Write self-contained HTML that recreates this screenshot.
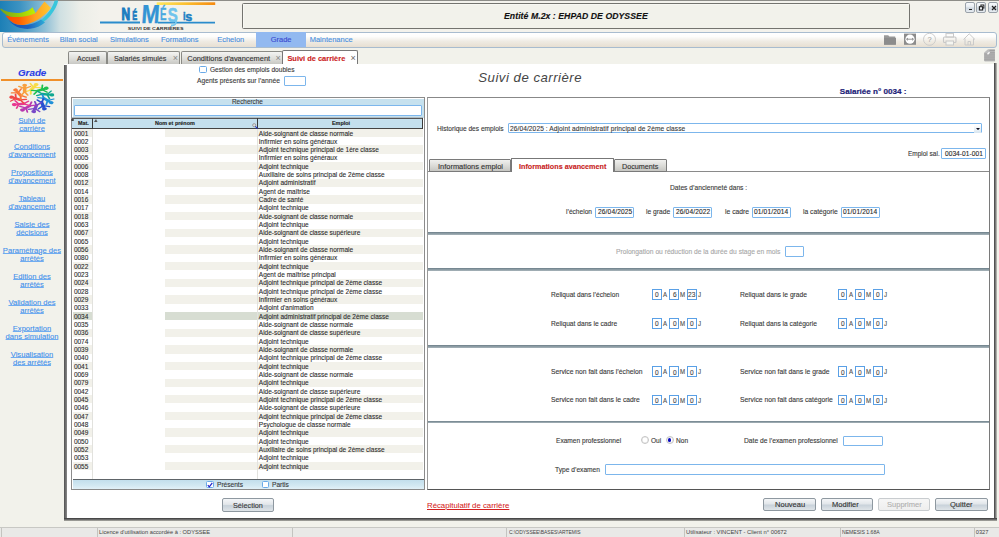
<!DOCTYPE html>
<html><head><meta charset="utf-8">
<style>
*{box-sizing:border-box;margin:0;padding:0}
html,body{width:999px;height:537px;overflow:hidden}
body{position:relative;background:#f2f2eb;font-family:"Liberation Sans",sans-serif;color:#333;-webkit-text-stroke:0.12px currentColor}
.a{position:absolute;white-space:nowrap}
.t{position:absolute;white-space:nowrap;font-size:6.9px;line-height:1;color:#3a3a3a;transform:scaleX(0.955);transform-origin:0 0;margin-top:0.6px}
/* header */
#topline{left:0;top:0;width:999px;height:1.3px;background:#8d8d88}
#hdr{left:0;top:1px;width:999px;height:30.5px;background:linear-gradient(90deg,#1c7fb6 0,#3d93c2 20px,#8fbfd6 45px,#cfe0e2 60px,#eceee8 80px,#f3f2ec 100px)}
#titlebox{left:241.7px;top:3.3px;width:668.5px;height:25.6px;border:1.2px solid #74746f;border-radius:1.5px;background:#f2f2eb;box-shadow:inset 0.8px 0.8px 0 #f9f9f5}
#title{left:504px;top:10.9px;font-size:8.7px;letter-spacing:0.05px;font-weight:bold;font-style:italic;color:#111}
.wb{position:absolute;top:2px;width:10.2px;height:10.6px;border:1px solid #9aa2aa;border-radius:2px;background:linear-gradient(#f8fafc,#e6ebf0 45%,#cdd6de 55%,#e8edf2)}
#menubar{left:2px;top:31.6px;width:995.2px;height:16px;border:1.4px solid #a8bccf;border-radius:3px;background:linear-gradient(#ffffff 0,#fdfdfc 25%,#efebe3 60%,#e7dfd2 100%)}
.mi{position:absolute;top:36.2px;font-size:7.5px;color:#4a90e0;line-height:1}
#gradehl{left:256.2px;top:32.3px;width:49.8px;height:14.6px;background:#92b9f0}
/* sidebar */
#sgrade{left:18px;top:67.3px;font-size:9.8px;font-weight:bold;font-style:italic;color:#2a3ee6}
#sline{left:0.7px;top:79.4px;width:62.5px;height:1.3px;background:#f0902a}
.sl{position:absolute;width:64px;left:0;text-align:center;font-size:7.6px;line-height:8.2px;color:#4290ea;text-decoration:underline;text-decoration-color:#70acf0;text-decoration-thickness:0.9px;text-underline-offset:0.1px;-webkit-text-stroke:0.1px currentColor}
/* tabs */
.tab{position:absolute;top:50.9px;height:12.9px;border:1px solid #8a8a85;border-bottom:none;border-radius:2px 2px 0 0;background:linear-gradient(#f4f4f2,#dcdcd8 60%,#c8c8c4)}
.tabt{position:absolute;top:54.6px;font-size:7.2px;line-height:1;color:#333}
/* window */
#win{left:64.3px;top:63.6px;width:932.5px;height:457.1px;background:#fff}
#winL{left:64.1px;top:64.8px;width:2.7px;height:455.8px;background:linear-gradient(90deg,#505050,#8a8a8a)}
#winR{left:993.8px;top:63.1px;width:3px;height:457.6px;background:linear-gradient(90deg,#3c3c3c,#7c7c7c,#c8c8c0)}
#winB{left:64.3px;top:518px;width:932.5px;height:2.7px;background:linear-gradient(#383838,#6a6a6a,#b0b0a8)}
.cb{position:absolute;width:7.2px;height:6.8px;border:1px solid #6aaae8;border-radius:1.5px;background:#fff}
.inp{position:absolute;border:1.2px solid #7cb6ec;border-radius:1px;background:#fff}
.hd{font-size:5.7px;font-weight:bold;color:#222}
.rs{position:absolute;height:8.33px;background:#f2f1ea}
.rt{position:absolute;white-space:nowrap;font-size:6.5px;line-height:1;color:#2c2c2c;-webkit-text-stroke:0.1px currentColor;margin-left:0.5px}
.btn{position:absolute;border:1px solid #8e98a0;border-radius:2px;background:linear-gradient(#f4f6f8,#e2e6ea 45%,#c8d2da 55%,#dfe4e8)}
.btn.dis{border-color:#c8cccf;background:linear-gradient(#f6f6f6,#eeeeee)}
.bt{font-size:7.9px;color:#333}
.tab2{position:absolute;top:159.4px;height:12.3px;border:1px solid #7a7a7a;border-radius:1px 1px 0 0;background:linear-gradient(#f0f0ee,#d8d8d4 60%,#c6c6c2)}
.sec{position:absolute;left:428.3px;width:560.8px;height:2.6px;background:linear-gradient(#6c7e88,#8c9ca4,#a8b4ba)}
.rad{position:absolute;width:8px;height:8px;border-radius:50%;border:1px solid #c4c4c4;background:#fff;box-shadow:inset 0 0 0 0.6px #e8e8e8}
.nb{position:absolute;width:9.8px;height:10.5px;border:1px solid #5aa0e6;background:#fff}
/* status */
#status{left:0;top:527px;width:999px;height:10px;background:#e9e9e7;border-top:1px solid #c8c8c4}
.sd{position:absolute;top:528px;width:1px;height:9px;background:#c4c4c0}
.st{position:absolute;top:529.6px;font-size:5.7px;line-height:1;color:#444;-webkit-text-stroke:0}
</style></head><body>
<div id="topline" class="a"></div>
<div id="hdr" class="a"></div>
<svg class="a" style="left:0;top:0" width="64" height="32" viewBox="0 0 64 32">
  <defs>
    <linearGradient id="og" gradientUnits="userSpaceOnUse" x1="5" y1="0" x2="51" y2="0"><stop offset="0" stop-color="#ff4800"/><stop offset="0.3" stop-color="#ff6000"/><stop offset="0.65" stop-color="#ffa020"/><stop offset="1" stop-color="#ffc830"/></linearGradient>
    <linearGradient id="bg2" gradientUnits="userSpaceOnUse" x1="8" y1="0" x2="46" y2="0"><stop offset="0" stop-color="#1a50b0"/><stop offset="0.55" stop-color="#1e62c0"/><stop offset="1" stop-color="#30b0d8"/></linearGradient>
    <linearGradient id="gg" gradientUnits="userSpaceOnUse" x1="0" y1="0" x2="36" y2="0"><stop offset="0" stop-color="#7aa018"/><stop offset="0.5" stop-color="#98c808"/><stop offset="1" stop-color="#c4f000"/></linearGradient>
  </defs>
  <path d="M58.2,0.5 C56.5,10 47,22.5 34,27 L30,27.5 C32,26.5 34,25 36,23.3 C45.5,18 52,9 54.6,0.5 Z" fill="#38c6dc"/>
  <path d="M8,19 C13,27 22,29.4 30,28.8 C36,28.2 41,25.8 45,22.5 L41,19.5 C35,23.5 29,25 25,25 C16,25.5 11,23 8,19 Z" fill="url(#bg2)"/>
  <path d="M5.5,15.5 C12,17.5 25,17 35.5,13 L44.5,1.5 L51,8 C45,15.5 37,22 25,24.8 C17,25.8 11,23 5.5,15.5 Z" fill="url(#og)"/>
  <path d="M0.5,8.3 C6,12 14,14 22,12.5 C27,11.5 30,9.5 32.5,7.2 L35.5,13 C30,16 22,17.5 13,17 C8,16.5 4,14 0.5,9.8 Z" fill="url(#gg)"/>
</svg>
<!-- logo -->
<svg class="a" style="left:0;top:0;-webkit-text-stroke:0" width="230" height="32" viewBox="0 0 230 32">
  <defs><linearGradient id="ob" x1="0" x2="1"><stop offset="0" stop-color="#ffe860"/><stop offset="0.5" stop-color="#fbbf30"/><stop offset="1" stop-color="#f58a10"/></linearGradient></defs>
  <rect x="156.7" y="2.3" width="58.5" height="2.7" fill="url(#ob)"/>
  <path d="M100,22.5 L140,22.5 M158,22.6 L215,22.6" stroke="#2a8ccc" stroke-width="1.8"/>
  <text x="121.5" y="19.6" font-family="Liberation Sans" font-weight="bold" font-size="17" fill="#1a7cc0" stroke="#1a7cc0" stroke-width="1.2" textLength="8.6" lengthAdjust="spacingAndGlyphs">N</text>
  <text x="132.2" y="19.5" font-family="Liberation Sans" font-weight="bold" font-size="12.5" fill="#1a7cc0" stroke="#1a7cc0" stroke-width="0.7" textLength="5" lengthAdjust="spacingAndGlyphs">É</text>
  <g transform="translate(140.2 22.5) skewX(-4) translate(-140.2 -22.5)">
  <text x="141" y="22.5" font-family="Liberation Sans" font-weight="bold" font-size="26" fill="#3394d4" stroke="#3394d4" stroke-width="0.4" textLength="18" lengthAdjust="spacingAndGlyphs">M</text></g>
  <text x="160" y="19.6" font-family="Liberation Sans" font-weight="bold" font-size="16.5" fill="#48a8e0" stroke="#48a8e0" stroke-width="0.4" textLength="6.5" lengthAdjust="spacingAndGlyphs">É</text>
  <text x="167.8" y="21.8" font-family="Liberation Sans" font-weight="bold" font-size="21" fill="#70c4ec" stroke="#70c4ec" stroke-width="0.6" textLength="10" lengthAdjust="spacingAndGlyphs">S</text>
  <path d="M175.5,18.5 C177,22 176,25.5 171,25.5" stroke="#78c8ee" stroke-width="1.8" fill="none"/>
  <text x="183" y="19.6" font-family="Liberation Sans" font-weight="bold" font-size="11.5" fill="#1a80c4" stroke="#1a80c4" stroke-width="0.5" textLength="2.6" lengthAdjust="spacingAndGlyphs">i</text>
  <text x="185.2" y="20.8" font-family="Liberation Sans" font-weight="bold" font-size="13" fill="#1a80c4" stroke="#1a80c4" stroke-width="0.5" textLength="7" lengthAdjust="spacingAndGlyphs">s</text>
  <text x="127.8" y="30.2" font-family="Liberation Sans" font-weight="bold" font-size="4.4" fill="#333" textLength="55.7" lengthAdjust="spacingAndGlyphs">SUIVI DE CARRIÈRES</text>
</svg>
<div id="titlebox" class="a"></div>
<div id="title" class="a">Entité M.2x : EHPAD DE ODYSSEE</div>
<div class="wb" style="left:964.5px"><div class="a" style="left:3px;top:5.6px;width:3.4px;height:1.4px;background:#222"></div></div>
<div class="wb" style="left:976.1px"><svg class="a" style="left:1.2px;top:1px" width="7" height="7" viewBox="0 0 7 7"><rect x="2.9" y="1" width="3" height="3" fill="none" stroke="#222" stroke-width="1"/><rect x="1.4" y="2.7" width="3.2" height="3.3" fill="#e8ecf0" stroke="#222" stroke-width="1.1"/></svg></div>
<div class="wb" style="left:987.8px"><svg class="a" style="left:1.8px;top:2px" width="6" height="6" viewBox="0 0 6 6"><path d="M1 1 L5 5 M5 1 L1 5" stroke="#222" stroke-width="1.2"/></svg></div>

<div id="menubar" class="a"></div>
<div id="gradehl" class="a"></div>
<div class="mi" style="left:7.2px">Événements</div>
<div class="mi" style="left:59.8px">Bilan social</div>
<div class="mi" style="left:110px">Simulations</div>
<div class="mi" style="left:161px">Formations</div>
<div class="mi" style="left:217.2px">Echelon</div>
<div class="mi" style="left:270.7px;color:#3a4ad0">Grade</div>
<div class="mi" style="left:309.7px">Maintenance</div>
<!-- icons -->
<svg class="a" style="left:883px;top:33px" width="95" height="13" viewBox="0 0 95 13">
  <path d="M1 2.2 h4.2 l1.2 1.4 h5.8 v8 h-11.2 z" fill="#9a9a9a"/>
  <path d="M1 4.8 h12 v7 h-12 z" fill="#8c8c8c"/>
  <rect x="21" y="0.6" width="12" height="11.2" fill="#8c8c8c"/>
  <circle cx="27" cy="6.2" r="4.6" fill="#fff"/>
  <path d="M23.6 6.2 h6.8 M23.6 6.2 l1.4 -1.2 M23.6 6.2 l1.4 1.2 M30.4 6.2 l-1.4 -1.2 M30.4 6.2 l-1.4 1.2" stroke="#888" stroke-width="0.9" fill="none"/>
  <circle cx="46.5" cy="6.3" r="6" fill="none" stroke="#c8c8c8" stroke-width="0.9"/>
  <text x="46.5" y="9" font-family="Liberation Sans" font-size="7.5" text-anchor="middle" fill="#999" style="-webkit-text-stroke:0">?</text>
  <rect x="63" y="0.6" width="7.5" height="3.5" fill="none" stroke="#c8c8c8" stroke-width="1"/>
  <rect x="60.5" y="4" width="12.5" height="5.5" rx="1" fill="none" stroke="#c8c8c8" stroke-width="1.1"/>
  <rect x="63" y="8" width="7.5" height="4" fill="#f5f5f0" stroke="#c8c8c8" stroke-width="1"/>
  <path d="M80.5 6.5 L86.2 0.8 L92 6.5 M82 5.5 V12 H90.5 V5.5 M85 12 V8.5 H87.5 V12" fill="none" stroke="#cacaca" stroke-width="1"/>
</svg>
<svg class="a" style="left:984px;top:49px;-webkit-text-stroke:0" width="11" height="13" viewBox="0 0 11 13"><path d="M4 0.2 H10.9 V12.4 H1.2 Q0.2 12.4 0.2 11.4 V3.6 Z" fill="#bdbdbd"/><rect x="0" y="4.60" width="11" height="0.9" fill="#959595"/><rect x="0" y="6.55" width="11" height="0.9" fill="#959595"/><rect x="0" y="8.50" width="11" height="0.9" fill="#959595"/><rect x="0" y="10.45" width="11" height="0.9" fill="#959595"/><rect x="5.5" y="0.8" width="5.4" height="1" fill="#9a9a9a"/><rect x="6" y="2.8" width="4.9" height="0.9" fill="#9a9a9a"/><path d="M3 4.8 L5 2.8 L6 3.8 L4 5.8 Z" fill="#fafafa"/></svg>

<!-- sidebar -->
<div id="sgrade" class="a">Grade</div>
<div id="sline" class="a"></div>
<svg class="a" style="left:8px;top:82px" width="48" height="32" viewBox="-24 -16 48 32"><g transform="scale(1.05,0.7)"><g transform="rotate(-95.0) translate(11.5 0) rotate(38)" stroke="#f8dc48" fill="#f8dc48" stroke-linecap="round"><path d="M-5 -3 L0 0 L-5 3" stroke-width="1.8" fill="none"/><path d="M0 0 L6 0" stroke-width="3.4"/><path d="M7.5 -5.5 L4.5 0 L7.5 5.5" stroke-width="1.7" fill="none"/><circle cx="9" cy="0" r="2.3" stroke="none"/></g><g transform="rotate(-62.3) translate(11.5 0) rotate(38)" stroke="#20c050" fill="#20c050" stroke-linecap="round"><path d="M-5 -3 L0 0 L-5 3" stroke-width="1.8" fill="none"/><path d="M0 0 L6 0" stroke-width="3.4"/><path d="M7.5 -5.5 L4.5 0 L7.5 5.5" stroke-width="1.7" fill="none"/><circle cx="9" cy="0" r="2.3" stroke="none"/></g><g transform="rotate(-29.5) translate(11.5 0) rotate(38)" stroke="#10a890" fill="#10a890" stroke-linecap="round"><path d="M-5 -3 L0 0 L-5 3" stroke-width="1.8" fill="none"/><path d="M0 0 L6 0" stroke-width="3.4"/><path d="M7.5 -5.5 L4.5 0 L7.5 5.5" stroke-width="1.7" fill="none"/><circle cx="9" cy="0" r="2.3" stroke="none"/></g><g transform="rotate(3.2) translate(11.5 0) rotate(38)" stroke="#2090d8" fill="#2090d8" stroke-linecap="round"><path d="M-5 -3 L0 0 L-5 3" stroke-width="1.8" fill="none"/><path d="M0 0 L6 0" stroke-width="3.4"/><path d="M7.5 -5.5 L4.5 0 L7.5 5.5" stroke-width="1.7" fill="none"/><circle cx="9" cy="0" r="2.3" stroke="none"/></g><g transform="rotate(35.9) translate(11.5 0) rotate(38)" stroke="#2850d0" fill="#2850d0" stroke-linecap="round"><path d="M-5 -3 L0 0 L-5 3" stroke-width="1.8" fill="none"/><path d="M0 0 L6 0" stroke-width="3.4"/><path d="M7.5 -5.5 L4.5 0 L7.5 5.5" stroke-width="1.7" fill="none"/><circle cx="9" cy="0" r="2.3" stroke="none"/></g><g transform="rotate(68.6) translate(11.5 0) rotate(38)" stroke="#7848c8" fill="#7848c8" stroke-linecap="round"><path d="M-5 -3 L0 0 L-5 3" stroke-width="1.8" fill="none"/><path d="M0 0 L6 0" stroke-width="3.4"/><path d="M7.5 -5.5 L4.5 0 L7.5 5.5" stroke-width="1.7" fill="none"/><circle cx="9" cy="0" r="2.3" stroke="none"/></g><g transform="rotate(101.4) translate(11.5 0) rotate(38)" stroke="#b838b0" fill="#b838b0" stroke-linecap="round"><path d="M-5 -3 L0 0 L-5 3" stroke-width="1.8" fill="none"/><path d="M0 0 L6 0" stroke-width="3.4"/><path d="M7.5 -5.5 L4.5 0 L7.5 5.5" stroke-width="1.7" fill="none"/><circle cx="9" cy="0" r="2.3" stroke="none"/></g><g transform="rotate(134.1) translate(11.5 0) rotate(38)" stroke="#e83890" fill="#e83890" stroke-linecap="round"><path d="M-5 -3 L0 0 L-5 3" stroke-width="1.8" fill="none"/><path d="M0 0 L6 0" stroke-width="3.4"/><path d="M7.5 -5.5 L4.5 0 L7.5 5.5" stroke-width="1.7" fill="none"/><circle cx="9" cy="0" r="2.3" stroke="none"/></g><g transform="rotate(166.8) translate(11.5 0) rotate(38)" stroke="#f04848" fill="#f04848" stroke-linecap="round"><path d="M-5 -3 L0 0 L-5 3" stroke-width="1.8" fill="none"/><path d="M0 0 L6 0" stroke-width="3.4"/><path d="M7.5 -5.5 L4.5 0 L7.5 5.5" stroke-width="1.7" fill="none"/><circle cx="9" cy="0" r="2.3" stroke="none"/></g><g transform="rotate(199.5) translate(11.5 0) rotate(38)" stroke="#f87838" fill="#f87838" stroke-linecap="round"><path d="M-5 -3 L0 0 L-5 3" stroke-width="1.8" fill="none"/><path d="M0 0 L6 0" stroke-width="3.4"/><path d="M7.5 -5.5 L4.5 0 L7.5 5.5" stroke-width="1.7" fill="none"/><circle cx="9" cy="0" r="2.3" stroke="none"/></g><g transform="rotate(232.3) translate(11.5 0) rotate(38)" stroke="#f8a040" fill="#f8a040" stroke-linecap="round"><path d="M-5 -3 L0 0 L-5 3" stroke-width="1.8" fill="none"/><path d="M0 0 L6 0" stroke-width="3.4"/><path d="M7.5 -5.5 L4.5 0 L7.5 5.5" stroke-width="1.7" fill="none"/><circle cx="9" cy="0" r="2.3" stroke="none"/></g></g></svg>
<div class="sl" style="top:116.8px">Suivi de<br>carrière</div>
<div class="sl" style="top:142.8px">Conditions<br>d'avancement</div>
<div class="sl" style="top:168.8px">Propositions<br>d'avancement</div>
<div class="sl" style="top:194.8px">Tableau<br>d'avancement</div>
<div class="sl" style="top:220.8px">Saisie des<br>décisions</div>
<div class="sl" style="top:246.8px">Paramétrage des<br>arrêtés</div>
<div class="sl" style="top:272.8px">Edition des<br>arrêtés</div>
<div class="sl" style="top:298.8px">Validation des<br>arrêtés</div>
<div class="sl" style="top:324.8px">Exportation<br>dans simulation</div>
<div class="sl" style="top:350.8px">Visualisation<br>des arrêtés</div>

<!-- tabs -->
<div class="tab" style="left:68.1px;width:39.4px"></div>
<div class="tabt" style="left:77px;font-size:7px">Accueil</div>
<div class="tab" style="left:107.3px;width:73.2px"></div>
<div class="tabt" style="left:114px">Salariés simulés</div>
<div class="tabt" style="left:172.8px;top:53.5px;color:#888;font-size:9px;-webkit-text-stroke:0">×</div>
<div class="tab" style="left:180.5px;width:102px"></div>
<div class="tabt" style="left:187.3px;font-size:7.4px">Conditions d'avancement</div>
<div class="tabt" style="left:275.5px;top:53.5px;color:#888;font-size:9px;-webkit-text-stroke:0">×</div>
<div class="tab" style="left:282.2px;width:75.4px;top:50.3px;height:13.6px;background:#fff;border-color:#777;z-index:2"></div>
<div class="tabt" style="left:287.4px;font-weight:bold;color:#cc2424;z-index:3;font-size:7.45px">Suivi de carrière</div>
<div class="tabt" style="left:350.4px;top:53.5px;color:#666;font-size:9px;z-index:3;-webkit-text-stroke:0">×</div>

<!-- window -->
<div id="win" class="a"></div>
<div id="winL" class="a"></div>
<div id="winR" class="a"></div>
<div id="winB" class="a"></div>

<!-- CONTENT -->
<div class="cb" style="left:199.3px;top:65.5px;width:7.4px;height:7.3px"></div>
<div class="t" style="left:210.2px;top:66.3px">Gestion des emplois doubles</div>
<div class="t" style="left:196.6px;top:77.5px;transform:scaleX(0.97)">Agents présents sur l’année</div>
<div class="inp" style="left:284px;top:75.5px;width:21.9px;height:10.3px"></div>

<!-- left table -->
<div class="a" style="left:70.9px;top:97.1px;width:354.1px;height:392.8px;border:1.6px solid #8c8c8c;background:#fff"></div>
<div class="a" style="left:73px;top:99px;width:350.5px;height:18.5px;background:#c6e1ee"></div>
<div class="t" style="left:231.8px;top:98.6px;font-size:6.7px">Recherche</div>
<div class="inp" style="left:73.6px;top:105px;width:348.3px;height:10.8px;border-width:1.2px"></div>
<div class="a" style="left:72.4px;top:117.6px;width:351.1px;height:11.1px;background:#c4e0ee;border-top:1.2px solid #555;border-bottom:1.2px solid #444;box-shadow:0 -0.8px 0 #a8b4ba"></div>
<div class="a" style="left:91.9px;top:117.5px;width:1.1px;height:11px;background:#3a3a3a"></div>
<div class="a" style="left:256.9px;top:117.5px;width:1.1px;height:11px;background:#3a3a3a"></div>
<div class="a" style="left:422.2px;top:117.5px;width:1.1px;height:11px;background:#3a3a3a"></div>
<div class="t hd" style="left:78px;top:120.6px">Mat.</div>
<div class="t hd" style="left:155px;top:120.6px">Nom et prénom</div>
<div class="t hd" style="left:331.7px;top:120.6px">Emploi</div>
<div class="a" style="left:71.3px;top:118.6px;width:2.8px;height:2.8px;border-radius:50%;background:#444"></div>
<svg class="a" style="left:93.5px;top:118.5px" width="5" height="3" viewBox="0 0 5 3"><path d="M0 3 L2 0 L3.5 3 Z" fill="#555"/></svg>
<svg class="a" style="left:251.5px;top:123px" width="6" height="6" viewBox="0 0 6 6"><circle cx="2.2" cy="2.2" r="1.6" fill="#ddd" stroke="#888" stroke-width="0.7"/><path d="M3.3 3.3 L5.6 5.6" stroke="#2030c0" stroke-width="1.1"/></svg>
<div id="ltab">
<div class="rs" style="top:128.60px;left:72.5px;width:19.8px"></div>
<div class="rs" style="top:128.60px;left:165px;width:258px"></div>
<div class="rs" style="top:145.26px;left:72.5px;width:19.8px"></div>
<div class="rs" style="top:145.26px;left:165px;width:258px"></div>
<div class="rs" style="top:161.92px;left:72.5px;width:19.8px"></div>
<div class="rs" style="top:161.92px;left:165px;width:258px"></div>
<div class="rs" style="top:178.58px;left:72.5px;width:19.8px"></div>
<div class="rs" style="top:178.58px;left:165px;width:258px"></div>
<div class="rs" style="top:195.24px;left:72.5px;width:19.8px"></div>
<div class="rs" style="top:195.24px;left:165px;width:258px"></div>
<div class="rs" style="top:211.90px;left:72.5px;width:19.8px"></div>
<div class="rs" style="top:211.90px;left:165px;width:258px"></div>
<div class="rs" style="top:228.56px;left:72.5px;width:19.8px"></div>
<div class="rs" style="top:228.56px;left:165px;width:258px"></div>
<div class="rs" style="top:245.22px;left:72.5px;width:19.8px"></div>
<div class="rs" style="top:245.22px;left:165px;width:258px"></div>
<div class="rs" style="top:261.88px;left:72.5px;width:19.8px"></div>
<div class="rs" style="top:261.88px;left:165px;width:258px"></div>
<div class="rs" style="top:278.54px;left:72.5px;width:19.8px"></div>
<div class="rs" style="top:278.54px;left:165px;width:258px"></div>
<div class="rs" style="top:295.20px;left:72.5px;width:19.8px"></div>
<div class="rs" style="top:295.20px;left:165px;width:258px"></div>
<div class="rs" style="top:311.86px;left:72.5px;width:19.8px;background:#d7ddd2"></div>
<div class="rs" style="top:311.86px;left:165px;width:258px;background:#d7ddd2"></div>
<div class="rs" style="top:328.52px;left:72.5px;width:19.8px"></div>
<div class="rs" style="top:328.52px;left:165px;width:258px"></div>
<div class="rs" style="top:345.18px;left:72.5px;width:19.8px"></div>
<div class="rs" style="top:345.18px;left:165px;width:258px"></div>
<div class="rs" style="top:361.84px;left:72.5px;width:19.8px"></div>
<div class="rs" style="top:361.84px;left:165px;width:258px"></div>
<div class="rs" style="top:378.50px;left:72.5px;width:19.8px"></div>
<div class="rs" style="top:378.50px;left:165px;width:258px"></div>
<div class="rs" style="top:395.16px;left:72.5px;width:19.8px"></div>
<div class="rs" style="top:395.16px;left:165px;width:258px"></div>
<div class="rs" style="top:411.82px;left:72.5px;width:19.8px"></div>
<div class="rs" style="top:411.82px;left:165px;width:258px"></div>
<div class="rs" style="top:428.48px;left:72.5px;width:19.8px"></div>
<div class="rs" style="top:428.48px;left:165px;width:258px"></div>
<div class="rs" style="top:445.14px;left:72.5px;width:19.8px"></div>
<div class="rs" style="top:445.14px;left:165px;width:258px"></div>
<div class="rs" style="top:461.80px;left:72.5px;width:19.8px"></div>
<div class="rs" style="top:461.80px;left:165px;width:258px"></div>
<div class="rt" style="top:130.50px;left:73.4px">0001</div>
<div class="rt" style="top:130.50px;left:258.3px">Aide-soignant de classe normale</div>
<div class="rt" style="top:138.83px;left:73.4px">0002</div>
<div class="rt" style="top:138.83px;left:258.3px">Infirmier en soins généraux</div>
<div class="rt" style="top:147.16px;left:73.4px">0003</div>
<div class="rt" style="top:147.16px;left:258.3px">Adjoint technique principal de 1ère classe</div>
<div class="rt" style="top:155.49px;left:73.4px">0005</div>
<div class="rt" style="top:155.49px;left:258.3px">Infirmier en soins généraux</div>
<div class="rt" style="top:163.82px;left:73.4px">0006</div>
<div class="rt" style="top:163.82px;left:258.3px">Adjoint technique</div>
<div class="rt" style="top:172.15px;left:73.4px">0008</div>
<div class="rt" style="top:172.15px;left:258.3px">Auxiliaire de soins principal de 2ème classe</div>
<div class="rt" style="top:180.48px;left:73.4px">0012</div>
<div class="rt" style="top:180.48px;left:258.3px">Adjoint administratif</div>
<div class="rt" style="top:188.81px;left:73.4px">0014</div>
<div class="rt" style="top:188.81px;left:258.3px">Agent de maîtrise</div>
<div class="rt" style="top:197.14px;left:73.4px">0016</div>
<div class="rt" style="top:197.14px;left:258.3px">Cadre de santé</div>
<div class="rt" style="top:205.47px;left:73.4px">0017</div>
<div class="rt" style="top:205.47px;left:258.3px">Adjoint technique</div>
<div class="rt" style="top:213.80px;left:73.4px">0018</div>
<div class="rt" style="top:213.80px;left:258.3px">Aide-soignant de classe normale</div>
<div class="rt" style="top:222.13px;left:73.4px">0063</div>
<div class="rt" style="top:222.13px;left:258.3px">Adjoint technique</div>
<div class="rt" style="top:230.46px;left:73.4px">0067</div>
<div class="rt" style="top:230.46px;left:258.3px">Aide-soignant de classe supérieure</div>
<div class="rt" style="top:238.79px;left:73.4px">0065</div>
<div class="rt" style="top:238.79px;left:258.3px">Adjoint technique</div>
<div class="rt" style="top:247.12px;left:73.4px">0056</div>
<div class="rt" style="top:247.12px;left:258.3px">Aide-soignant de classe normale</div>
<div class="rt" style="top:255.45px;left:73.4px">0080</div>
<div class="rt" style="top:255.45px;left:258.3px">Infirmier en soins généraux</div>
<div class="rt" style="top:263.78px;left:73.4px">0022</div>
<div class="rt" style="top:263.78px;left:258.3px">Adjoint technique</div>
<div class="rt" style="top:272.11px;left:73.4px">0023</div>
<div class="rt" style="top:272.11px;left:258.3px">Agent de maîtrise principal</div>
<div class="rt" style="top:280.44px;left:73.4px">0024</div>
<div class="rt" style="top:280.44px;left:258.3px">Adjoint technique principal de 2ème classe</div>
<div class="rt" style="top:288.77px;left:73.4px">0028</div>
<div class="rt" style="top:288.77px;left:258.3px">Adjoint technique principal de 2ème classe</div>
<div class="rt" style="top:297.10px;left:73.4px">0029</div>
<div class="rt" style="top:297.10px;left:258.3px">Infirmier en soins généraux</div>
<div class="rt" style="top:305.43px;left:73.4px">0033</div>
<div class="rt" style="top:305.43px;left:258.3px">Adjoint d'animation</div>
<div class="rt" style="top:313.76px;left:73.4px">0034</div>
<div class="rt" style="top:313.76px;left:258.3px">Adjoint administratif principal de 2ème classe</div>
<div class="rt" style="top:322.09px;left:73.4px">0035</div>
<div class="rt" style="top:322.09px;left:258.3px">Aide-soignant de classe normale</div>
<div class="rt" style="top:330.42px;left:73.4px">0036</div>
<div class="rt" style="top:330.42px;left:258.3px">Aide-soignant de classe supérieure</div>
<div class="rt" style="top:338.75px;left:73.4px">0074</div>
<div class="rt" style="top:338.75px;left:258.3px">Adjoint technique</div>
<div class="rt" style="top:347.08px;left:73.4px">0039</div>
<div class="rt" style="top:347.08px;left:258.3px">Aide-soignant de classe normale</div>
<div class="rt" style="top:355.41px;left:73.4px">0040</div>
<div class="rt" style="top:355.41px;left:258.3px">Adjoint technique principal de 2ème classe</div>
<div class="rt" style="top:363.74px;left:73.4px">0041</div>
<div class="rt" style="top:363.74px;left:258.3px">Adjoint technique</div>
<div class="rt" style="top:372.07px;left:73.4px">0069</div>
<div class="rt" style="top:372.07px;left:258.3px">Aide-soignant de classe normale</div>
<div class="rt" style="top:380.40px;left:73.4px">0079</div>
<div class="rt" style="top:380.40px;left:258.3px">Adjoint technique</div>
<div class="rt" style="top:388.73px;left:73.4px">0042</div>
<div class="rt" style="top:388.73px;left:258.3px">Aide-soignant de classe supérieure</div>
<div class="rt" style="top:397.06px;left:73.4px">0045</div>
<div class="rt" style="top:397.06px;left:258.3px">Adjoint technique principal de 2ème classe</div>
<div class="rt" style="top:405.39px;left:73.4px">0046</div>
<div class="rt" style="top:405.39px;left:258.3px">Aide-soignant de classe supérieure</div>
<div class="rt" style="top:413.72px;left:73.4px">0047</div>
<div class="rt" style="top:413.72px;left:258.3px">Adjoint technique principal de 2ème classe</div>
<div class="rt" style="top:422.05px;left:73.4px">0048</div>
<div class="rt" style="top:422.05px;left:258.3px">Psychologue de classe normale</div>
<div class="rt" style="top:430.38px;left:73.4px">0049</div>
<div class="rt" style="top:430.38px;left:258.3px">Adjoint technique</div>
<div class="rt" style="top:438.71px;left:73.4px">0050</div>
<div class="rt" style="top:438.71px;left:258.3px">Adjoint technique</div>
<div class="rt" style="top:447.04px;left:73.4px">0052</div>
<div class="rt" style="top:447.04px;left:258.3px">Auxiliaire de soins principal de 2ème classe</div>
<div class="rt" style="top:455.37px;left:73.4px">0053</div>
<div class="rt" style="top:455.37px;left:258.3px">Adjoint technique</div>
<div class="rt" style="top:463.70px;left:73.4px">0055</div>
<div class="rt" style="top:463.70px;left:258.3px">Adjoint technique</div>
</div>
<div class="a" style="left:92.1px;top:128.6px;width:0.8px;height:350.5px;background:#e2e2de"></div>
<div class="a" style="left:257.2px;top:128.6px;width:0.8px;height:350.5px;background:#e2e2de"></div>
<div class="a" style="left:73px;top:479.1px;width:350.5px;height:10.7px;background:linear-gradient(#c2deec,#d2e8f2 60%,#e2f1f8);border-top:1.2px solid #5e6468;border-bottom:1.3px solid #8a8a8a"></div>
<div class="cb" style="left:206.2px;top:480.6px;width:7.4px;height:7.3px"></div>
<svg class="a" style="left:207px;top:481.5px" width="6" height="6" viewBox="0 0 6 6"><path d="M0.8 3.2 L2.3 4.8 L5.3 0.8" stroke="#2020c8" stroke-width="1.2" fill="none"/></svg>
<div class="t" style="left:216.7px;top:481.9px">Présents</div>
<div class="cb" style="left:261.5px;top:480.6px;width:7.4px;height:7.3px"></div>
<div class="t" style="left:271.9px;top:481.9px">Partis</div>
<div class="btn" style="left:221.5px;top:498.2px;width:52px;height:13.5px"></div>
<div class="t" style="left:232.6px;top:501.2px;font-size:7.6px">Sélection</div>

<!-- right panel -->
<div class="a" style="left:427.4px;top:97.3px;width:562.8px;height:392.3px;border:1.4px solid #7a7a7a;border-left-color:#9a9a9a;border-top-color:#888;border-bottom-color:#555;background:#fff"></div>
<div class="a" id="stitle" style="left:478.3px;top:71px;font-family:'Liberation Sans',sans-serif;font-style:italic;font-size:13.2px;line-height:1;color:#454545;letter-spacing:0.5px;-webkit-text-stroke:0">Suivi de carrière</div>
<div class="a" style="left:839.8px;top:88.1px;font-size:8.1px;line-height:1;font-weight:bold;color:#1c1c78;-webkit-text-stroke:0.2px currentColor">Salariée n° 0034 :</div>
<div class="t" style="left:436.8px;top:125.3px">Historique des emplois</div>
<div class="inp" style="left:508px;top:123.3px;width:473.8px;height:10.2px"></div>
<div class="a" style="left:973.7px;top:124.6px;width:7.3px;height:8px;background:linear-gradient(#fff,#d8e6f0)"></div>
<svg class="a" style="left:975.6px;top:127.6px" width="4" height="2.2" viewBox="0 0 4 2.2"><path d="M0 0 H4 L2 2.2 Z" fill="#112"/></svg>
<div class="t" style="left:510.2px;top:125.4px;letter-spacing:0.1px">26/04/2025 : Adjoint administratif principal de 2ème classe</div>
<div class="t" style="left:907.5px;top:150.3px;transform:scaleX(0.94)">Emploi sal.</div>
<div class="inp" style="left:941.3px;top:148px;width:45.2px;height:10.6px"></div>
<div class="t" style="left:945px;top:150.5px;color:#2a2a2a;letter-spacing:0.05px">0034-01-001</div>
<!-- inner tabs -->
<div class="a" style="left:428.3px;top:171.1px;width:560.8px;height:1.3px;background:#8a8a8a"></div>
<div class="tab2" style="left:429.2px;width:81.7px"></div>
<div class="t" style="left:438.2px;top:162.5px;font-size:7.8px;color:#333">Informations emploi</div>
<div class="tab2" style="left:510.7px;width:103.6px;top:158.2px;height:14px;background:#fff;border-color:#777;border-bottom:none"></div>
<div class="t" style="left:518.8px;top:162.5px;font-size:7.55px;font-weight:bold;color:#c82222">Informations avancement</div>
<div class="tab2" style="left:614.3px;width:52.5px"></div>
<div class="t" style="left:621.5px;top:162.5px;font-size:7.55px;color:#333">Documents</div>

<div class="t" style="left:670px;top:184.8px;transform:scaleX(0.968)">Dates d’ancienneté dans :</div>
<div class="t" style="left:566.2px;top:208.6px">l’échelon</div>
<div class="inp" style="left:595px;top:207px;width:39px;height:10.6px"></div>
<div class="t" style="left:597.5px;top:208.9px;letter-spacing:0.15px;color:#2a2a2a">26/04/2025</div>
<div class="t" style="left:645.8px;top:208.6px;transform:scaleX(0.97)">le grade</div>
<div class="inp" style="left:673px;top:207px;width:39.2px;height:10.6px"></div>
<div class="t" style="left:675.5px;top:208.9px;letter-spacing:0.15px;color:#2a2a2a">26/04/2022</div>
<div class="t" style="left:724.6px;top:208.6px;transform:scaleX(0.98)">le cadre</div>
<div class="inp" style="left:751.5px;top:207px;width:39.2px;height:10.6px"></div>
<div class="t" style="left:754px;top:208.9px;letter-spacing:0.15px;color:#2a2a2a">01/01/2014</div>
<div class="t" style="left:802.7px;top:208.6px;transform:scaleX(0.978)">la catégorie</div>
<div class="inp" style="left:840.7px;top:207px;width:38.9px;height:10.6px"></div>
<div class="t" style="left:843.2px;top:208.9px;letter-spacing:0.15px;color:#2a2a2a">01/01/2014</div>

<div class="sec" style="top:232.1px"></div>
<div class="t" style="left:615.8px;top:248.2px;color:#a8a8a8;transform:scaleX(0.97)">Prolongation ou réduction de la durée du stage en mois</div>
<div class="inp" style="left:784.5px;top:246.3px;width:19.3px;height:10.6px"></div>
<div class="sec" style="top:268.1px"></div>

<div class="t" style="left:550.6px;top:291px">Reliquat dans l’échelon</div>
<div class="t" style="left:550.6px;top:320px;transform:scaleX(0.965)">Reliquat dans le cadre</div>
<div class="t" style="left:739.8px;top:291px;transform:scaleX(0.972)">Reliquat dans le grade</div>
<div class="t" style="left:739.8px;top:320px;transform:scaleX(0.966)">Reliquat dans la catégorie</div>
<div class="sec" style="top:345.1px"></div>
<div class="t" style="left:550.6px;top:368.3px;transform:scaleX(0.978)">Service non fait dans l’échelon</div>
<div class="t" style="left:550.6px;top:396px;transform:scaleX(0.978)">Service non fait dans le cadre</div>
<div class="t" style="left:739.8px;top:368.3px;transform:scaleX(0.982)">Service non fait dans le grade</div>
<div class="t" style="left:739.8px;top:396px;transform:scaleX(0.98)">Service non fait dans catégorie</div>
<div class="nb" style="left:651.9px;top:289.1px"></div><div class="t" style="left:655.0px;top:291.7px;color:#484848">0</div><div class="t" style="left:662.9px;top:291.5px;font-size:6.4px;color:#505050">A</div><div class="nb" style="left:669.4px;top:289.1px"></div><div class="t" style="left:672.5px;top:291.7px;color:#484848">6</div><div class="t" style="left:680.4px;top:291.5px;font-size:6.4px;color:#505050">M</div><div class="nb" style="left:687.1px;top:289.1px"></div><div class="t" style="left:688.4px;top:291.7px;color:#484848">23</div><div class="t" style="left:698.1px;top:291.5px;font-size:6.4px;color:#505050">J</div>
<div class="nb" style="left:837.7px;top:289.1px"></div><div class="t" style="left:840.8px;top:291.7px;color:#484848">0</div><div class="t" style="left:848.7px;top:291.5px;font-size:6.4px;color:#505050">A</div><div class="nb" style="left:855.2px;top:289.1px"></div><div class="t" style="left:858.3px;top:291.7px;color:#484848">0</div><div class="t" style="left:866.2px;top:291.5px;font-size:6.4px;color:#505050">M</div><div class="nb" style="left:872.9px;top:289.1px"></div><div class="t" style="left:876.0px;top:291.7px;color:#484848">0</div><div class="t" style="left:883.9px;top:291.5px;font-size:6.4px;color:#505050">J</div>
<div class="nb" style="left:651.9px;top:318.0px"></div><div class="t" style="left:655.0px;top:320.6px;color:#484848">0</div><div class="t" style="left:662.9px;top:320.4px;font-size:6.4px;color:#505050">A</div><div class="nb" style="left:669.4px;top:318.0px"></div><div class="t" style="left:672.5px;top:320.6px;color:#484848">0</div><div class="t" style="left:680.4px;top:320.4px;font-size:6.4px;color:#505050">M</div><div class="nb" style="left:687.1px;top:318.0px"></div><div class="t" style="left:690.2px;top:320.6px;color:#484848">0</div><div class="t" style="left:698.1px;top:320.4px;font-size:6.4px;color:#505050">J</div>
<div class="nb" style="left:837.7px;top:318.0px"></div><div class="t" style="left:840.8px;top:320.6px;color:#484848">0</div><div class="t" style="left:848.7px;top:320.4px;font-size:6.4px;color:#505050">A</div><div class="nb" style="left:855.2px;top:318.0px"></div><div class="t" style="left:858.3px;top:320.6px;color:#484848">0</div><div class="t" style="left:866.2px;top:320.4px;font-size:6.4px;color:#505050">M</div><div class="nb" style="left:872.9px;top:318.0px"></div><div class="t" style="left:876.0px;top:320.6px;color:#484848">0</div><div class="t" style="left:883.9px;top:320.4px;font-size:6.4px;color:#505050">J</div>
<div class="nb" style="left:651.9px;top:366.4px"></div><div class="t" style="left:655.0px;top:369.0px;color:#484848">0</div><div class="t" style="left:662.9px;top:368.8px;font-size:6.4px;color:#505050">A</div><div class="nb" style="left:669.4px;top:366.4px"></div><div class="t" style="left:672.5px;top:369.0px;color:#484848">0</div><div class="t" style="left:680.4px;top:368.8px;font-size:6.4px;color:#505050">M</div><div class="nb" style="left:687.1px;top:366.4px"></div><div class="t" style="left:690.2px;top:369.0px;color:#484848">0</div><div class="t" style="left:698.1px;top:368.8px;font-size:6.4px;color:#505050">J</div>
<div class="nb" style="left:837.7px;top:366.4px"></div><div class="t" style="left:840.8px;top:369.0px;color:#484848">0</div><div class="t" style="left:848.7px;top:368.8px;font-size:6.4px;color:#505050">A</div><div class="nb" style="left:855.2px;top:366.4px"></div><div class="t" style="left:858.3px;top:369.0px;color:#484848">0</div><div class="t" style="left:866.2px;top:368.8px;font-size:6.4px;color:#505050">M</div><div class="nb" style="left:872.9px;top:366.4px"></div><div class="t" style="left:876.0px;top:369.0px;color:#484848">0</div><div class="t" style="left:883.9px;top:368.8px;font-size:6.4px;color:#505050">J</div>
<div class="nb" style="left:651.9px;top:394.6px"></div><div class="t" style="left:655.0px;top:397.2px;color:#484848">0</div><div class="t" style="left:662.9px;top:397.0px;font-size:6.4px;color:#505050">A</div><div class="nb" style="left:669.4px;top:394.6px"></div><div class="t" style="left:672.5px;top:397.2px;color:#484848">0</div><div class="t" style="left:680.4px;top:397.0px;font-size:6.4px;color:#505050">M</div><div class="nb" style="left:687.1px;top:394.6px"></div><div class="t" style="left:690.2px;top:397.2px;color:#484848">0</div><div class="t" style="left:698.1px;top:397.0px;font-size:6.4px;color:#505050">J</div>
<div class="nb" style="left:837.7px;top:394.6px"></div><div class="t" style="left:840.8px;top:397.2px;color:#484848">0</div><div class="t" style="left:848.7px;top:397.0px;font-size:6.4px;color:#505050">A</div><div class="nb" style="left:855.2px;top:394.6px"></div><div class="t" style="left:858.3px;top:397.2px;color:#484848">0</div><div class="t" style="left:866.2px;top:397.0px;font-size:6.4px;color:#505050">M</div><div class="nb" style="left:872.9px;top:394.6px"></div><div class="t" style="left:876.0px;top:397.2px;color:#484848">0</div><div class="t" style="left:883.9px;top:397.0px;font-size:6.4px;color:#505050">J</div>
<div class="sec" style="top:420.9px"></div>
<div class="t" style="left:555.7px;top:437.5px">Examen professionnel</div>
<div class="rad" style="left:640.5px;top:436.4px"></div>
<div class="t" style="left:651.2px;top:437.5px">Oui</div>
<div class="rad" style="left:665.6px;top:436.4px"><div class="a" style="left:1.1px;top:1.1px;width:3.8px;height:3.8px;border-radius:50%;background:#0a0ac0"></div></div>
<div class="t" style="left:676.2px;top:437.5px">Non</div>
<div class="t" style="left:744.3px;top:437.5px;transform:scaleX(0.972)">Date de l’examen professionnel</div>
<div class="inp" style="left:843.1px;top:435.8px;width:40.4px;height:10.5px"></div>
<div class="t" style="left:555.1px;top:466.3px;transform:scaleX(0.963)">Type d’examen</div>
<div class="inp" style="left:605.3px;top:464px;width:279.4px;height:10.5px"></div>

<div class="a" style="left:427px;top:500.6px;font-size:7.8px;color:#d42020;text-decoration:underline;text-decoration-thickness:0.6px;text-underline-offset:0.8px;-webkit-text-stroke:0.05px currentColor">Récapitulatif de carrière</div>
<div class="btn" style="left:763.3px;top:498.3px;width:52.4px;height:13.2px"></div>
<div class="t bt" style="left:774.5px;top:500.9px">Nouveau</div>
<div class="btn" style="left:820.9px;top:498.3px;width:51.8px;height:13.2px"></div>
<div class="t bt" style="left:832px;top:500.9px">Modifier</div>
<div class="btn dis" style="left:878.2px;top:498.3px;width:51.8px;height:13.2px"></div>
<div class="t bt" style="left:886.5px;top:500.9px;color:#b0b0b0">Supprimer</div>
<div class="btn" style="left:935.2px;top:498.3px;width:52.4px;height:13.2px"></div>
<div class="t bt" style="left:950px;top:500.9px">Quitter</div>

<!-- status -->
<div id="status" class="a"></div>
<div class="sd" style="left:1px"></div>
<div class="sd" style="left:96.5px"></div>
<div class="sd" style="left:292px"></div>
<div class="sd" style="left:506.4px"></div>
<div class="sd" style="left:683.8px"></div>
<div class="sd" style="left:840.1px"></div>
<div class="sd" style="left:974.1px"></div>
<div class="st" style="left:99px">Licence d'utilisation accordée à : ODYSSEE</div>
<div class="st" style="left:508.8px;transform:scaleX(0.873);transform-origin:0 0">C:\ODYSSEE\BASES\ARTEMIS</div>
<div class="st" style="left:686px;font-size:5.8px">Utilisateur : VINCENT - Client n° 00672</div>
<div class="st" style="left:842px;transform:scaleX(0.895);transform-origin:0 0">NEMESIS 1.68A</div>
<div class="st" style="left:975.8px">0327</div>

</body></html>
